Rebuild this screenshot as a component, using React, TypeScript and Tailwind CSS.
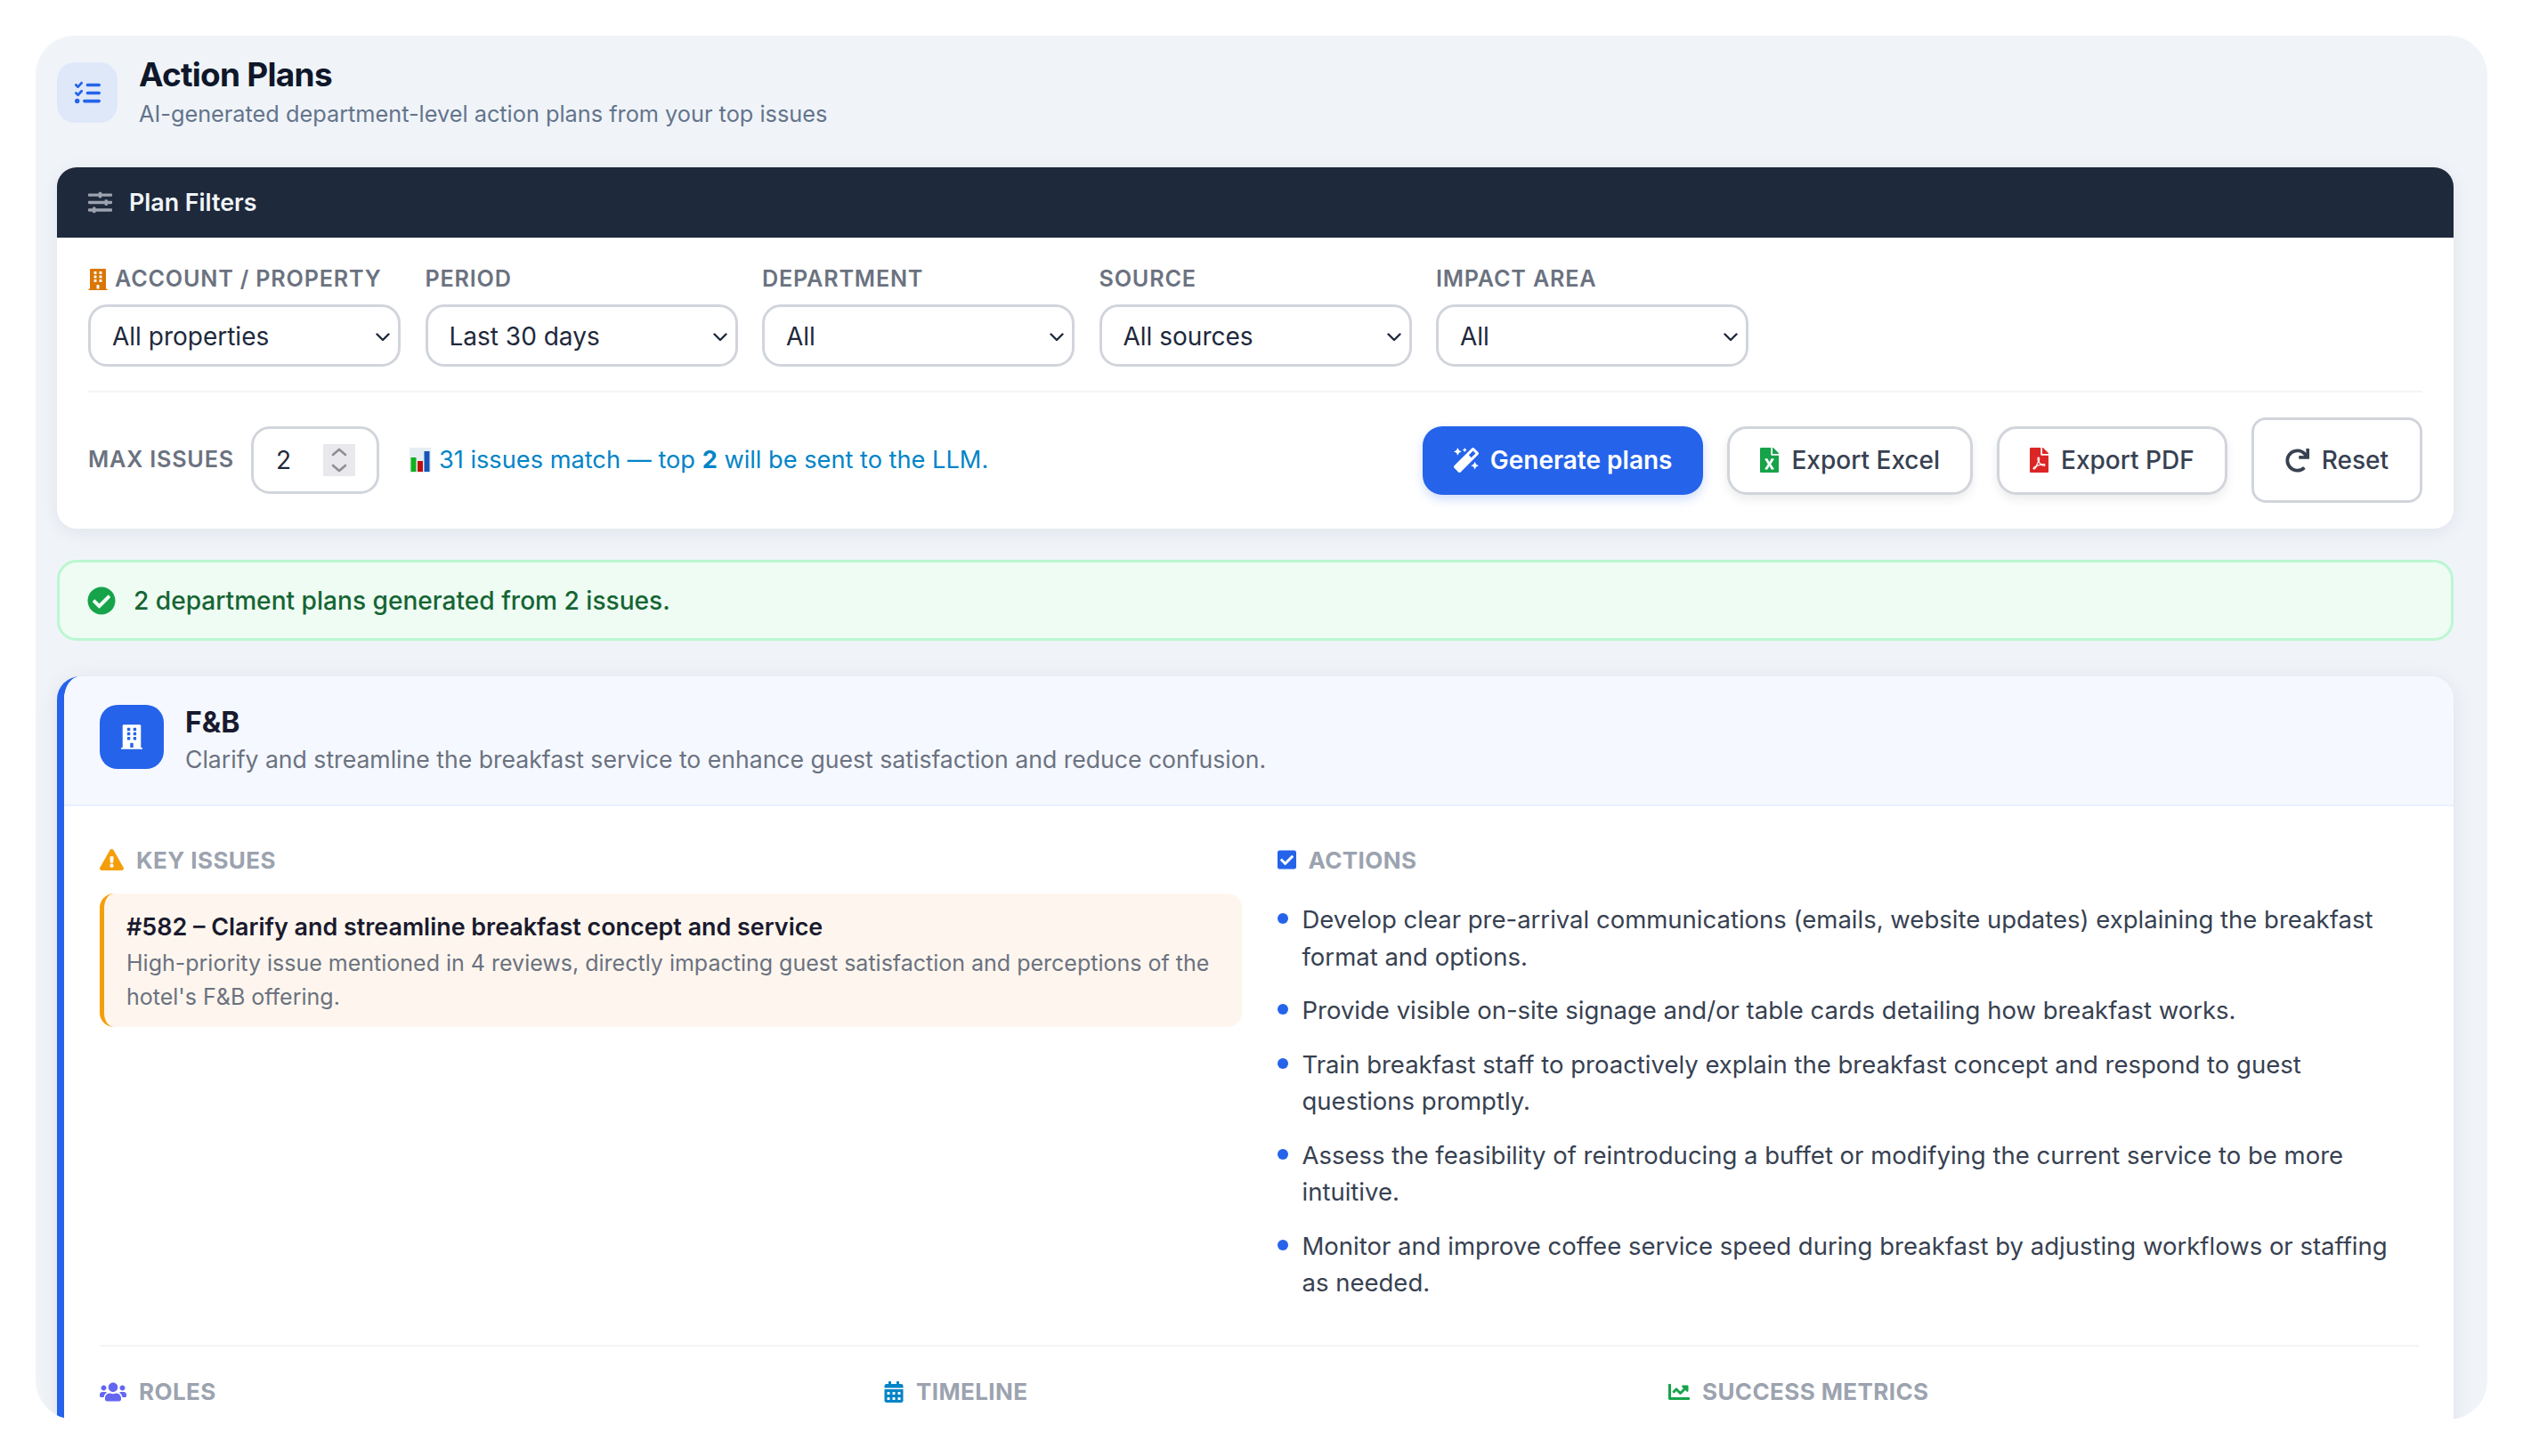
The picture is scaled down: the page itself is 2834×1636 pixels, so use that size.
import type { ReactNode } from "react";
import {
  FaBuilding,
  FaCalendarAlt,
  FaChartLine,
  FaCheckCircle,
  FaCheckSquare,
  FaExclamationTriangle,
  FaFileExcel,
  FaFilePdf,
  FaMagic,
  FaRedo,
  FaSlidersH,
  FaUsers,
} from "react-icons/fa";
import { FaListCheck } from "react-icons/fa6";

const filters = [
  { label: "PERIOD", value: "Last 30 days" },
  { label: "DEPARTMENT", value: "All" },
  { label: "SOURCE", value: "All sources" },
  { label: "IMPACT AREA", value: "All" },
];

const actions = [
  "Develop clear pre-arrival communications (emails, website updates) explaining the breakfast format and options.",
  "Provide visible on-site signage and/or table cards detailing how breakfast works.",
  "Train breakfast staff to proactively explain the breakfast concept and respond to guest questions promptly.",
  "Assess the feasibility of reintroducing a buffet or modifying the current service to be more intuitive.",
  "Monitor and improve coffee service speed during breakfast by adjusting workflows or staffing as needed.",
];

function FilterSelect({ label, value, icon }: { label: string; value: string; icon?: ReactNode }) {
  return (
    <div className="w-[351px]">
      <div className="mb-[13px] flex h-[31px] items-center gap-[8px] text-[25.2px] font-semibold tracking-[0.8px] text-[#6b7280]">
        {icon}
        {label}
      </div>
      <div className="relative">
        <select
          defaultValue={value}
          className="h-[70px] w-full appearance-none rounded-[21px] border-[3px] border-[#d1d5db] bg-white pl-[24px] pt-[2px] text-[28px] text-[#1e293b]"
        >
          <option>{value}</option>
        </select>
        <svg viewBox="0 0 16 10" className="pointer-events-none absolute right-[12px] top-[32px] h-[10px] w-[16px] text-[#1e293b]">
          <polyline points="1.5,1.5 8,8 14.5,1.5" fill="none" stroke="currentColor" strokeWidth="2.4" strokeLinecap="round" strokeLinejoin="round" />
        </svg>
      </div>
    </div>
  );
}

function SectionLabel({ icon, children }: { icon: ReactNode; children: string }) {
  return (
    <div className="flex h-[30px] items-center gap-[14px] text-[26px] font-bold tracking-[0.4px] text-[#9ca3af]">
      {icon}
      {children}
    </div>
  );
}

function OutlineButton({ icon, children }: { icon: ReactNode; children: string }) {
  return (
    <button className="flex h-[77px] items-center gap-[14px] rounded-[22px] border-[3px] border-[#d1d5db] bg-white px-[34px] text-[28px] font-medium text-[#374151] shadow-[0_5px_12px_rgba(0,0,0,0.08)]">
      {icon}
      {children}
    </button>
  );
}

export default function App() {
  return (
    <div className="h-[1636px] overflow-hidden bg-white px-[40px] pt-[40px] font-['Inter',sans-serif]">
      <div className="h-[1555px] overflow-hidden rounded-[44px] bg-[#f0f4f9] pl-[24px] pr-[38px] pt-[20px]">
        {/* Page heading */}
        <div className="mb-[40px] flex items-center gap-[24px]">
          <div className="flex h-[68px] w-[68px] items-center justify-center rounded-[20px] bg-[#dfe8f9]">
            <FaListCheck className="h-[29px] w-[29px] text-[#2563eb]" />
          </div>
          <div>
            <h1 className="h-[48px] text-[37px] font-bold leading-[48px] tracking-[-0.75px] text-[#0f172a]">Action Plans</h1>
            <p className="h-[40px] text-[25.3px] leading-[40px] text-[#64748b]">AI-generated department-level action plans from your top issues</p>
          </div>
        </div>

        {/* Filters */}
        <section className="overflow-hidden rounded-[22px] bg-white shadow-[0_4px_20px_rgba(15,23,42,0.07)]">
          <div className="flex h-[79px] items-center gap-[19px] bg-[#1e293b] px-[35px] text-[26.8px] font-semibold text-[#f1f5f9]">
            <FaSlidersH className="h-[27px] w-[27px] text-[#9ca3af]" />
            Plan Filters
          </div>
          <div className="px-[35px] pb-[29px] pt-[31px]">
            <div className="flex gap-[27.5px] border-b-2 border-[#f3f4f6] pb-[27px]">
              <FilterSelect
                label="ACCOUNT / PROPERTY"
                value="All properties"
                icon={<FaBuilding className="h-[24px] w-[22px] text-[#d97706]" />}
              />
              {filters.map((f) => (
                <FilterSelect key={f.label} label={f.label} value={f.value} />
              ))}
            </div>
            <div className="flex items-center pt-[28px]">
              <span className="text-[25.2px] font-semibold tracking-[0.8px] text-[#6b7280]">MAX ISSUES</span>
              <div className="ml-[19px] flex h-[76px] w-[144px] items-center justify-between rounded-[21px] border-[3px] border-[#d1d5db] pl-[25px] pr-[24px] text-[28px] text-[#1e293b]">
                2
                <svg viewBox="0 0 36 36" className="h-[36px] w-[36px]">
                  <rect width="36" height="36" fill="#e8e8ed" />
                  <polyline points="11,12 18,6 25,12" fill="none" stroke="#8e8e93" strokeWidth="2.6" strokeLinecap="round" strokeLinejoin="round" />
                  <polyline points="11,24 18,30 25,24" fill="none" stroke="#8e8e93" strokeWidth="2.6" strokeLinecap="round" strokeLinejoin="round" />
                </svg>
              </div>
              <svg viewBox="0 0 24 28" className="ml-[34px] h-[28px] w-[24px]">
                <rect width="24" height="28" fill="#e6eef4" />
                <rect x="1.5" y="11" width="6" height="16" fill="#10b01f" />
                <rect x="9" y="15" width="6" height="12" fill="#c30d0d" />
                <rect x="16.5" y="4" width="6" height="23" fill="#1556b8" />
              </svg>
              <span className="ml-[9px] text-[27.2px] text-[#0284c7]">
                31 issues match — top <b>2</b> will be sent to the LLM.
              </span>
              <div className="ml-auto flex items-center gap-[27px]">
                <button className="flex h-[77px] items-center gap-[13px] rounded-[22px] bg-[#2563eb] px-[35px] text-[28px] font-semibold text-white shadow-[0_5px_12px_rgba(37,99,235,0.22)]">
                  <FaMagic className="h-[28px] w-[28px]" />
                  Generate plans
                </button>
                <OutlineButton icon={<FaFileExcel className="h-[28px] w-[21px] text-[#16a34a]" />}>Export Excel</OutlineButton>
                <OutlineButton icon={<FaFilePdf className="h-[28px] w-[21px] text-[#dc2626]" />}>Export PDF</OutlineButton>
                <button className="flex h-[96px] items-center gap-[14px] rounded-[16px] border-[3px] border-[#d1d5db] bg-white px-[35px] text-[28px] font-medium text-[#374151]">
                  <FaRedo className="h-[27px] w-[27px]" />
                  Reset
                </button>
              </div>
            </div>
          </div>
        </section>

        {/* Result banner */}
        <div className="mt-[35px] flex h-[91px] items-center gap-[20px] rounded-[22px] border-[3px] border-[#bbf7d0] bg-[#eefcf3] px-[31px] text-[28.1px] font-medium text-[#166534]">
          <FaCheckCircle className="h-[32px] w-[32px] text-[#16a34a]" />
          <span className="pt-[2px]">2 department plans generated from 2 issues.</span>
        </div>

        {/* Department plan */}
        <section className="mt-[40px] overflow-hidden rounded-[26px] border-l-[8px] border-[#2563eb] bg-white shadow-[0_4px_24px_rgba(15,23,42,0.08)]">
          <div className="flex items-start gap-[24px] border-b-2 border-[#e8f0fe] bg-[#f5f8ff] pb-[30px] pl-[40px] pr-[39px] pt-[32px]">
            <div className="flex h-[72px] w-[72px] items-center justify-center rounded-[20px] bg-[#2563eb]">
              <FaBuilding className="h-[28px] w-[24px] text-white" />
            </div>
            <div>
              <h2 className="text-[32px] font-bold leading-[40px] text-[#1a1a2e]">F&amp;B</h2>
              <p className="text-[26.6px] leading-[42px] text-[#6b7280]">
                Clarify and streamline the breakfast service to enhance guest satisfaction and reduce confusion.
              </p>
            </div>
          </div>

          <div className="pb-[80px] pl-[40px] pr-[39px] pt-[45px]">
            <div className="grid grid-cols-2 gap-x-[40px] border-b-2 border-[#f3f4f6] pb-[48px]">
              <div>
                <SectionLabel icon={<FaExclamationTriangle className="h-[24px] w-[27px] text-[#f59e0b]" />}>KEY ISSUES</SectionLabel>
                <div className="mt-[23px] rounded-[16px] border-l-[5px] border-[#f59e0b] bg-[#fef6ee] pb-[15px] pl-[25px] pr-[25px] pt-[18px]">
                  <div className="mb-[3px] text-[26.9px] font-semibold leading-[38px] text-[#1a1a2e]">
                    #582 – Clarify and streamline breakfast concept and service
                  </div>
                  <p className="text-[25px] leading-[38px] text-[#6b7280]">
                    High-priority issue mentioned in 4 reviews, directly impacting guest satisfaction and perceptions of the hotel's F&amp;B offering.
                  </p>
                </div>
              </div>
              <div>
                <SectionLabel icon={<FaCheckSquare className="h-[24px] w-[21px] text-[#2563eb]" />}>ACTIONS</SectionLabel>
                <ul className="mt-[32px] flex flex-col gap-[19px]">
                  {actions.map((a) => (
                    <li key={a} className="flex items-start gap-[16px] text-[27.5px] leading-[41.5px] text-[#374151]">
                      <span className="mt-[13px] h-[12px] w-[12px] shrink-0 rounded-full bg-[#2563eb]" />
                      {a}
                    </li>
                  ))}
                </ul>
              </div>
            </div>
            <div className="grid grid-cols-3 gap-x-[38px] pt-[36px]">
              <SectionLabel icon={<FaUsers className="h-[24px] w-[30px] text-[#6366f1]" />}>ROLES</SectionLabel>
              <SectionLabel icon={<FaCalendarAlt className="h-[24px] w-[22px] text-[#0284c7]" />}>TIMELINE</SectionLabel>
              <SectionLabel icon={<FaChartLine className="h-[24px] w-[24px] text-[#16a34a]" />}>SUCCESS METRICS</SectionLabel>
            </div>
          </div>
        </section>
      </div>
    </div>
  );
}
